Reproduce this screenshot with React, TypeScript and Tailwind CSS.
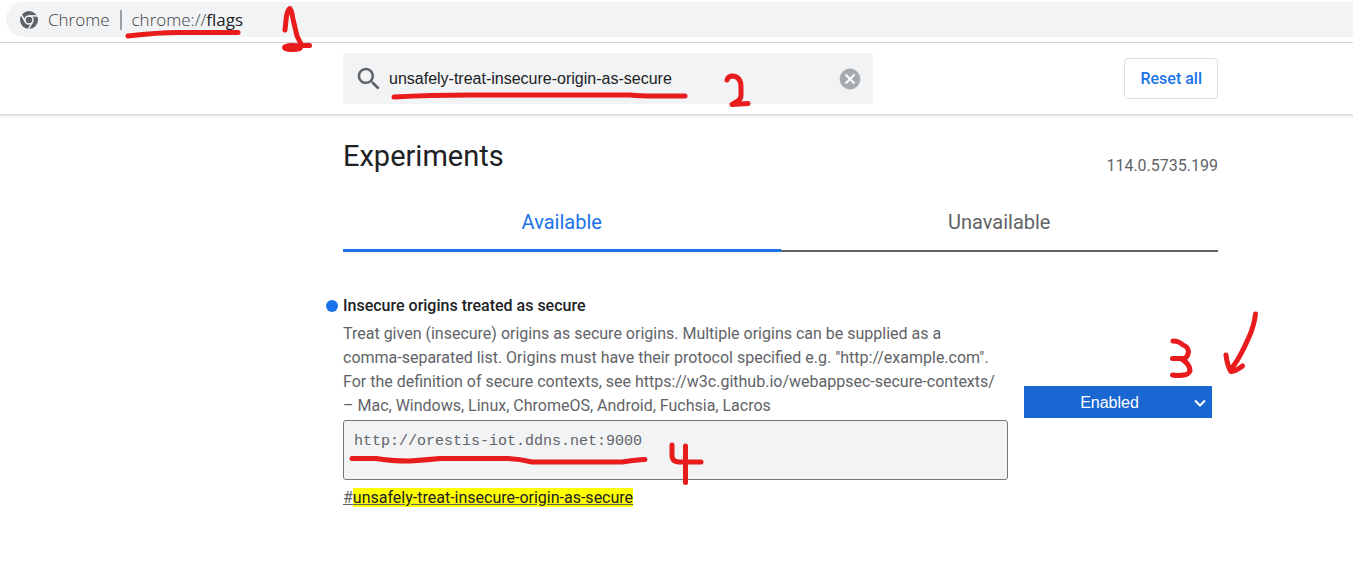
import React, { useState } from 'react';

function ChromeLogo() {
  return (
    <svg viewBox="0 0 24 24" className="size-5 shrink-0" aria-hidden="true">
      <circle cx="12" cy="12" r="10.8" fill="#5f6368" />
      <g stroke="#f1f3f4" strokeWidth="1.8" fill="none">
        <circle cx="12" cy="12" r="4.9" />
        <path d="M12 7.1H22.5" />
        <path d="M7.800 14.400L2.600 5.400" />
        <path d="M16.200 14.400L11 23.500" />
      </g>
    </svg>
  );
}

function SearchIcon() {
  return (
    <svg viewBox="0 0 24 24" className="size-[30px] shrink-0" fill="#5f6368" aria-hidden="true">
      <path d="M15.5 14h-.79l-.28-.27C15.41 12.59 16 11.11 16 9.5 16 5.91 13.09 3 9.5 3S3 5.91 3 9.5 5.91 16 9.5 16c1.61 0 3.09-.59 4.23-1.57l.27.28v.79l5 4.99L20.49 19l-4.99-5zm-6 0C7.01 14 5 11.99 5 9.5S7.01 5 9.5 5 14 7.01 14 9.5 11.99 14 9.5 14z" />
    </svg>
  );
}

function ClearIcon() {
  return (
    <svg viewBox="0 0 22 22" className="size-[22px]" aria-hidden="true">
      <circle cx="11" cy="11" r="10.4" fill="#a8abad" />
      <path d="M6.500 6.500l9 9M15.500 6.500l-9 9" stroke="#fff" strokeWidth="2" />
    </svg>
  );
}

function AddressBar() {
  return (
    <div className="border-b border-[#dadce0] pt-[2px] pb-[5px] pl-[6px]">
      <div className="flex h-[35px] items-center rounded-l-full bg-[#f1f3f4] pl-[13px] font-['Open_Sans',sans-serif] text-[17px] font-light text-[#3c4043]">
        <ChromeLogo />
        <span className="ml-[9px]">Chrome</span>
        <span className="mx-[10px] h-5 w-[2px] bg-[#9aa0a6]" />
        <span>
          chrome://<span className="font-normal text-[#202124]">flags</span>
        </span>
      </div>
    </div>
  );
}

function MarkerStrokes() {
  return (
    <svg
      width="1353"
      height="562"
      viewBox="0 0 1353 562"
      className="pointer-events-none absolute top-0 left-0"
      fill="none"
      stroke="#e81c1c"
      strokeWidth="5"
      strokeLinecap="round"
      strokeLinejoin="round"
      aria-hidden="true"
    >
      <path d="M128 36C145 34 160 32.500 178 32.500H238" />
      <path d="M285 30L286.500 16Q288 9 290 8.500Q291.500 10 293 19L297 36L301 44" />
      <path d="M301 45.500H309.500" />
      <ellipse cx="292.500" cy="47.500" rx="8" ry="2" fill="#e81c1c" />
      <path d="M394 97Q430 95 470 95H630Q640 96 655 96H685" />
      <path d="M727 80Q728 76 733 76Q741 77 741 87V95Q741 99 738 101L732 104.500L748 103.500" />
      <path d="M1173 341Q1179 341 1183 345Q1188.500 347 1188.500 352Q1188 357 1184 358.500H1172.500H1181Q1190 364 1190 371Q1188 375 1184 375Q1178 376 1172.500 375" />
      <path d="M1255.500 314Q1254 326 1249 337Q1238 362 1230 370" />
      <path d="M1226 355Q1227 365 1231 371.500Q1236 371 1242.500 366" />
      <path d="M352 458.500H376Q390 461 410 461Q425 460 440 458.500H508Q520 459 532 462H622Q634 460 645 459.500" />
      <path d="M672 445V456Q672 461 678 462H701" />
      <path d="M685.500 446V482.500" />
    </svg>
  );
}

export default function App() {
  const [query, setQuery] = useState('unsafely-treat-insecure-origin-as-secure');
  const [origins, setOrigins] = useState('http://orestis-iot.ddns.net:9000');
  const [state, setState] = useState('Enabled');

  return (
    <div className="relative min-h-screen overflow-hidden bg-white font-[Roboto,sans-serif] text-base text-[#5f6368]">
      <AddressBar />

      <header className="flex items-center justify-between py-[10px] pr-[135px] pl-[343px] shadow-[0_1px_2px_1px_rgba(60,64,67,0.2)]">
        <div className="flex h-[51px] w-[530px] items-center rounded bg-[#f1f3f4] pr-3 pl-[11px]">
          <SearchIcon />
          <input
            type="text"
            aria-label="Search flags"
            value={query}
            onChange={(e) => setQuery(e.target.value)}
            className="ml-[5px] min-w-0 flex-1 bg-transparent font-['Liberation_Sans',sans-serif] text-base text-[#202124] outline-none"
          />
          <button type="button" aria-label="Clear search" onClick={() => setQuery('')}>
            <ClearIcon />
          </button>
        </div>
        <button
          type="button"
          className="h-[41px] rounded-[4px] border border-[#dadce0] px-[15px] font-medium text-[#1a73e8]"
        >
          Reset all
        </button>
      </header>

      <main className="pr-[135px] pl-[343px]">
        <div className="flex items-end justify-between pt-6">
          <h1 className="text-[29px] leading-9 text-[#202124]">Experiments</h1>
          <span className="leading-4">114.0.5735.199</span>
        </div>

        <div role="tablist" className="mt-[18px] grid grid-cols-2 text-xl">
          <button
            type="button"
            role="tab"
            aria-selected="true"
            className="h-[60px] border-b-[3px] border-[#1a73e8] pt-[2px] text-[#1a73e8]"
          >
            Available
          </button>
          <button
            type="button"
            role="tab"
            aria-selected="false"
            className="h-[60px] border-b-2 border-[#5f6368] pt-[2px]"
          >
            Unavailable
          </button>
        </div>

        <section className="flex items-center gap-4 pt-[42px] pr-[6px]">
          <div className="min-w-0 flex-1">
            <h2 className="-ml-[17px] flex items-center gap-[5px] leading-6 font-medium text-[#202124]">
              <span className="size-3 rounded-full bg-[#1a73e8]" />
              Insecure origins treated as secure
            </h2>
            <p className="mt-1 leading-6">
              Treat given (insecure) origins as secure origins. Multiple origins can be supplied as a
              <br />
              comma-separated list. Origins must have their protocol specified e.g. "http://example.com".
              <br />
              For the definition of secure contexts, see https://w3c.github.io/webappsec-secure-contexts/
              <br />– Mac, Windows, Linux, ChromeOS, Android, Fuchsia, Lacros
            </p>
            <textarea
              aria-label="Insecure origins treated as secure"
              value={origins}
              onChange={(e) => setOrigins(e.target.value)}
              className="mt-[2px] block h-[60px] w-full resize-none rounded-[3px] border border-[#767676] bg-[#f1f3f4] px-[10px] py-[9px] font-['Liberation_Mono',monospace] text-[15px] leading-6 outline-none"
            />
            <a
              href="#unsafely-treat-insecure-origin-as-secure"
              className="mt-[6px] block leading-6 underline"
            >
              #<mark className="bg-[#ffff00] text-[#202124]">unsafely-treat-insecure-origin-as-secure</mark>
            </a>
          </div>
          <div className="relative w-[188px] shrink-0 text-white">
            <select
              aria-label="Flag state"
              value={state}
              onChange={(e) => setState(e.target.value)}
              className="h-8 w-full appearance-none bg-[#1967d2] pt-px pr-[17px] text-center font-['Liberation_Sans',sans-serif] text-base [text-align-last:center]"
            >
              <option>Default</option>
              <option>Enabled</option>
              <option>Disabled</option>
            </select>
            <svg
              viewBox="0 0 12 8"
              className="pointer-events-none absolute top-[13px] right-[6px] h-2 w-3"
              fill="none"
              stroke="currentColor"
              strokeWidth="2"
              aria-hidden="true"
            >
              <path d="M1 1.500L6 6.500L11 1.500" />
            </svg>
          </div>
        </section>
      </main>

      <MarkerStrokes />
    </div>
  );
}
